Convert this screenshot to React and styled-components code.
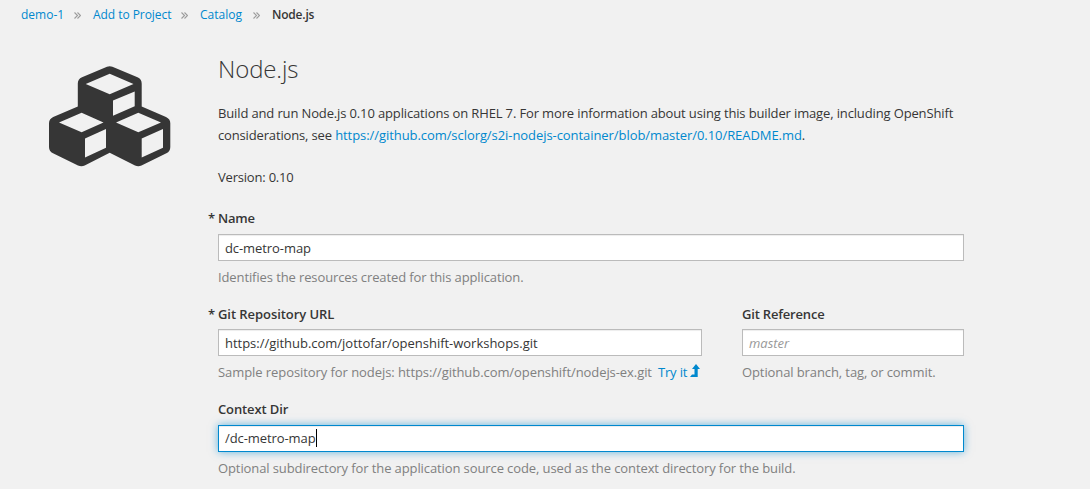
import React from "react";
import styled, { createGlobalStyle, css } from "styled-components";

const GlobalStyle = createGlobalStyle`
  * { box-sizing: border-box; }
  body {
    margin: 0;
    background: #f1f1f1;
    color: #363636;
    font: 13px/22px "Open Sans", sans-serif;
    font-feature-settings: "liga";
    overflow: hidden;
  }
`;

const Page = styled.div`
  width: 1090px;
  height: 489px;
  overflow: hidden;
`;

const Breadcrumb = styled.nav`
  display: flex;
  align-items: center;
  height: 20px;
  margin-top: 5px;
  padding-left: 21px;
  font-size: 12px;
  line-height: 20px;
`;

const Crumb = styled.a`
  width: ${(p) => p.$width}px;
  white-space: nowrap;
  color: #0088ce;
  letter-spacing: ${(p) => p.$spacing || 0}px;
`;

const CurrentCrumb = styled.span`
  font-weight: 600;
  letter-spacing: ${(p) => p.$spacing || 0}px;
`;

const Separator = styled.svg`
  width: 7px;
  height: 7px;
  margin: 1px 12px 0 10px;
  fill: none;
  stroke: #9c9c9c;
  stroke-width: 1.1;
`;

const Body = styled.main`
  display: grid;
  grid-template-columns: 169px 746px;
  padding-left: 49px;
`;

const CubesIcon = styled.svg`
  width: 122px;
  height: 101px;
  margin-top: 41px;
  fill: #363636;
`;

const Content = styled.div`
  display: flex;
  flex-direction: column;
`;

const Title = styled.h1`
  margin: 27px 0 0;
  font-size: 24px;
  line-height: 33px;
  font-weight: 300;
  letter-spacing: ${(p) => p.$spacing || 0}px;
`;

const Description = styled.p`
  margin: 17px 0 0;
`;

const Line = styled.span`
  display: block;
  white-space: nowrap;
  letter-spacing: ${(p) => p.$spacing || 0}px;
`;

const Version = styled.p`
  margin: 20px 0 0;
  letter-spacing: -0.2px;
`;

const Link = styled.a`
  color: #0088ce;
  letter-spacing: ${(p) => p.$spacing || 0}px;
`;

const Field = styled.div`
  width: ${(p) => p.$width || 746}px;
  margin-top: ${(p) => p.$top || 0}px;
`;

const FieldRow = styled.div`
  display: flex;
  gap: 40px;
  margin-top: 15px;
`;

const Label = styled.label`
  display: block;
  height: 22px;
  font-weight: 600;
  letter-spacing: ${(p) => p.$spacing || 0}px;
  ${(p) =>
    p.$required &&
    css`
      margin-left: -10px;
      &::before {
        content: "*";
        display: inline-block;
        width: 10px;
        letter-spacing: 0;
      }
    `}
`;

const TextBox = styled.div`
  display: flex;
  align-items: center;
  height: 27px;
  margin-top: ${(p) => p.$top || 4}px;
  padding: 0 6px;
  border: 1px solid #bbb;
  background: #fff;
  box-shadow: inset 0 1px 1px rgba(0, 0, 0, 0.075);
  white-space: nowrap;
  letter-spacing: ${(p) => p.$spacing || 0}px;
  ${(p) =>
    p.$focused &&
    css`
      padding-bottom: 2px;
      border-color: #0088ce;
      box-shadow: inset 0 1px 1px rgba(0, 0, 0, 0.075), 0 0 8px rgba(0, 136, 206, 0.6);
    `}
`;

const Placeholder = styled.span`
  color: #999;
  font-style: italic;
`;

const Caret = styled.span`
  width: 1px;
  height: 18px;
  background: #000;
`;

const Help = styled.div`
  margin-top: 5px;
  height: 22px;
  color: #808080;
  white-space: nowrap;
  letter-spacing: ${(p) => p.$spacing || 0}px;
`;

const TryLink = styled(Link)`
  margin-left: 6px;
`;

const UpArrow = styled.svg`
  width: 10px;
  height: 14px;
  margin-left: 3px;
  vertical-align: -1px;
  fill: #0088ce;
`;

function Chevrons() {
  return (
    <Separator viewBox="0 0 7 7">
      <path d="M.5 .5L3.5 3.5L.5 6.5M3.5 .5L6.5 3.5L3.5 6.5" />
    </Separator>
  );
}

function Cubes() {
  return (
    <CubesIcon viewBox="49 66 122 101">
      <path
        fillRule="evenodd"
        d="M107 66.7Q109.7 65.6 112.4 66.7L137.5 77.3Q141.7 79.2 141.7 83.5V106.6L166 117Q170.3 119 170.3 123.2V147Q170.3 151.3 166.4 153.3L141.5 165.6Q138.3 167 135 165.6L109.7 152.8L84.7 165.6Q81.5 167 78 165.6L53 153.3Q49 151.3 49 147V123.2Q49 119 53.2 117L77.8 106.6V83.5Q77.8 79.2 82 77.3Z
        M85.7 84L109.7 94.3L133.5 84L109.7 73.7Z
        M113 100.5V115.7L134.7 106.3V91.5Z
        M59 122.6L81.6 132.2L103.5 122.6L81.6 112.7Z
        M85 138.4V157.4L106 147.7V128.9Z
        M116 122.6L138.3 132.2L161 122.6L138.3 112.7Z
        M141.7 138.4V157.4L163 147.7V128.9Z"
      />
    </CubesIcon>
  );
}

export default function App() {
  return (
    <Page>
      <GlobalStyle />
      <Breadcrumb>
        <Crumb $width={43}>demo-1</Crumb>
        <Chevrons />
        <Crumb $width={78} $spacing={-0.05}>Add to Project</Crumb>
        <Chevrons />
        <Crumb $width={43}>Catalog</Crumb>
        <Chevrons />
        <CurrentCrumb $spacing={-0.2}>Node.js</CurrentCrumb>
      </Breadcrumb>
      <Body>
        <Cubes />
        <Content>
          <Title $spacing={-0.12}>Node.js</Title>
          <Description>
            <Line $spacing={-0.138}>
              Build and run Node.js 0.10 applications on RHEL 7. For more information about using this builder image, including OpenShift
            </Line>
            <Line $spacing={-0.15}>
              considerations, see{" "}
              <Link $spacing={-0.065}>https://github.com/sclorg/s2i-nodejs-container/blob/master/0.10/README.md</Link>.
            </Line>
          </Description>
          <Version>Version: 0.10</Version>
          <Field $top={19}>
            <Label $required $spacing={-0.2}>Name</Label>
            <TextBox $top={5} $spacing={-0.08}>dc-metro-map</TextBox>
            <Help $spacing={-0.115}>Identifies the resources created for this application.</Help>
          </Field>
          <FieldRow>
            <Field $width={484}>
              <Label $required $spacing={-0.06}>Git Repository URL</Label>
              <TextBox $spacing={-0.02}>https://github.com/jottofar/openshift-workshops.git</TextBox>
              <Help $spacing={-0.07}>
                Sample repository for nodejs: https://github.com/openshift/nodejs-ex.git
                <TryLink $spacing={-0.15}>
                  Try it
                  <UpArrow viewBox="0 0 10 14">
                    <path d="M6 0L10 5H7.7V13H0L2 10.5H4.5V5H2Z" />
                  </UpArrow>
                </TryLink>
              </Help>
            </Field>
            <Field $width={222}>
              <Label $spacing={-0.18}>Git Reference</Label>
              <TextBox>
                <Placeholder>master</Placeholder>
              </TextBox>
              <Help $spacing={-0.1}>Optional branch, tag, or commit.</Help>
            </Field>
          </FieldRow>
          <Field $top={15}>
            <Label $spacing={-0.12}>Context Dir</Label>
            <TextBox $top={5} $spacing={-0.08} $focused>
              /dc-metro-map
              <Caret />
            </TextBox>
            <Help $spacing={-0.102}>Optional subdirectory for the application source code, used as the context directory for the build.</Help>
          </Field>
        </Content>
      </Body>
    </Page>
  );
}
